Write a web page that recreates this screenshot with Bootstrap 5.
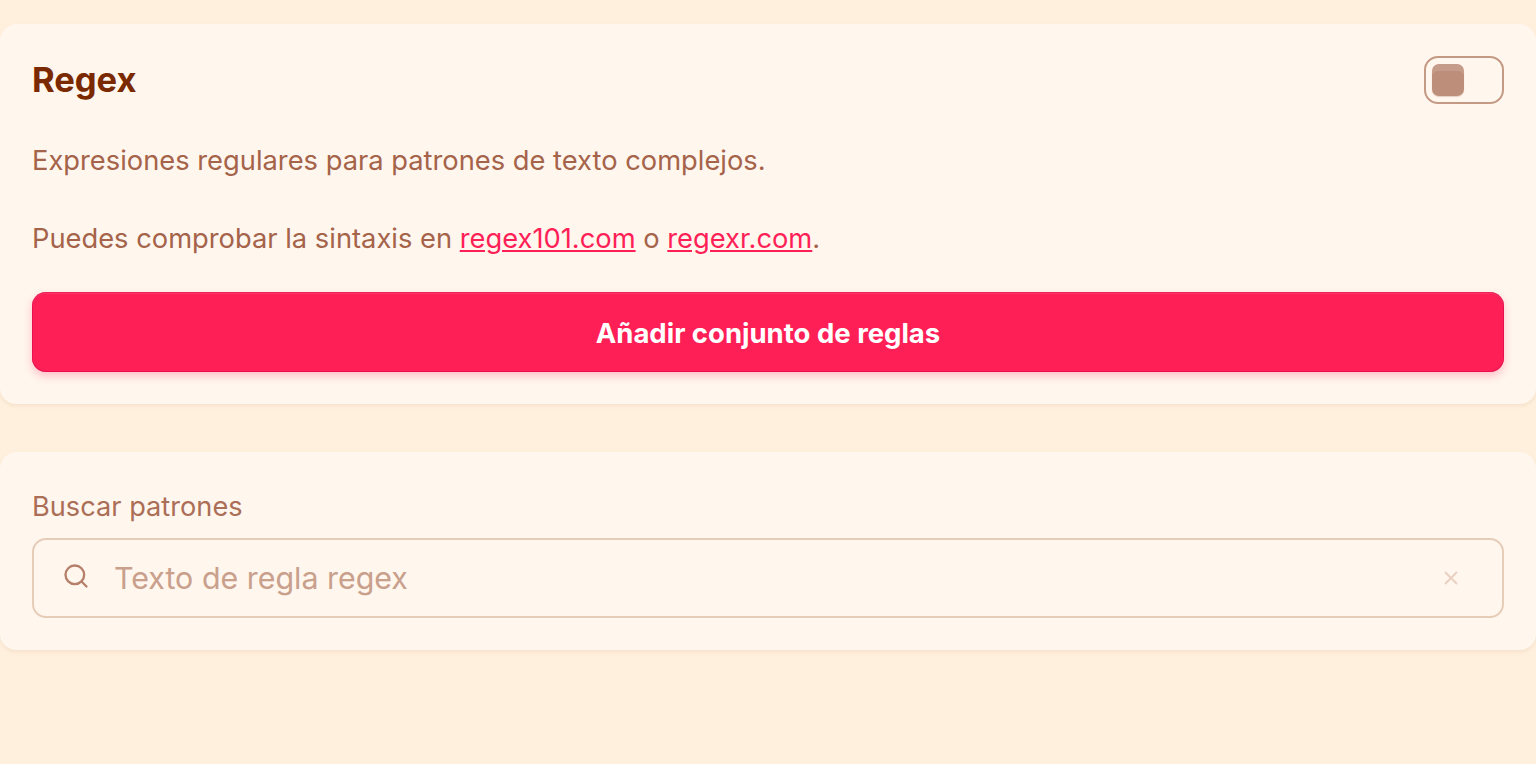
<!doctype html>
<html lang="es"><head><meta charset="utf-8">
<link href="https://cdn.jsdelivr.net/npm/bootstrap@5.3.0/dist/css/bootstrap.min.css" rel="stylesheet">
<style>
html,body{height:100%}
body{background:#fff0dd;font-family:Inter,"Liberation Sans",sans-serif;padding-top:24px;overflow:hidden}
.panel{background:#fff6ee;border-radius:16px;padding:32px;box-shadow:0 2px 4px rgba(170,100,50,.1);margin-bottom:48px}
.head-row{margin-bottom:37px}
.ttl{font-size:34.6px;font-weight:700;color:#7b2900;line-height:46px;margin:0 0 2px;letter-spacing:-.05px}
.desc{font-size:27.3px;line-height:39px;color:#a5634a;margin:0}
.desc a{color:#ff1f57}
.tog{width:80px;height:48px;border:2px solid #c49a84;border-radius:14px;padding:6px}
.knob{width:32px;height:32px;border-radius:7px;background:#bd8f7a;box-shadow:inset 0 8px 0 -1px rgba(255,255,255,.12),0 1px 1px rgba(120,60,20,.2)}
.cta{background:#ff1f57;color:#fff;border:0;border-radius:14px;height:80px;padding-top:10px;font-size:27.5px;font-weight:700;box-shadow:inset 0 2px 0 rgba(255,255,255,.08),inset 0 0 0 1px rgba(215,10,70,.6),0 4px 8px rgba(255,31,87,.25);margin-top:33.5px}
.cta:hover{background:#ff1f57;color:#fff}
.lbl{font-size:27.2px;line-height:46px;color:#ab6e56;margin-bottom:8px;display:block}
.srch{height:80px;border:2px solid #e6cdb8;border-radius:14px;padding:0 43px 0 28px}
.srch input{background:none;border:0;outline:0;padding:2px 0 0;font-size:30.4px;color:#a5634a;flex:1;min-width:0}
.srch input::placeholder{color:#c9a08c;opacity:1}
.srch svg:first-child{margin-top:-3px}
</style></head><body>
<section class="panel">
<div class="head-row d-flex justify-content-between align-items-center"><h1 class="ttl">Regex</h1><div class="tog"><div class="knob"></div></div></div>
<p class="desc">Expresiones regulares para patrones de texto complejos.</p>
<p class="desc">&nbsp;</p>
<p class="desc">Puedes comprobar la sintaxis en <a href="#">regex101.com</a> o <a href="#">regexr.com</a>.</p>
<button class="btn cta w-100" type="button">Añadir conjunto de reglas</button>
</section>
<section class="panel">
<label class="lbl" for="q">Buscar patrones</label>
<div class="srch d-flex align-items-center gap-4">
<svg width="28" height="28" viewBox="0 0 24 24" fill="none" stroke="#b57f69" stroke-width="2" stroke-linecap="round"><circle cx="11" cy="11" r="8"/><path d="m21 21-4.3-4.3"/></svg>
<input id="q" placeholder="Texto de regla regex">
<svg width="16" height="16" viewBox="0 0 16 16" fill="none" stroke="#e8cfc0" stroke-width="1.8"><path d="M2 2l12 12M14 2L2 14"/></svg>
</div>
</section>
</body></html>
